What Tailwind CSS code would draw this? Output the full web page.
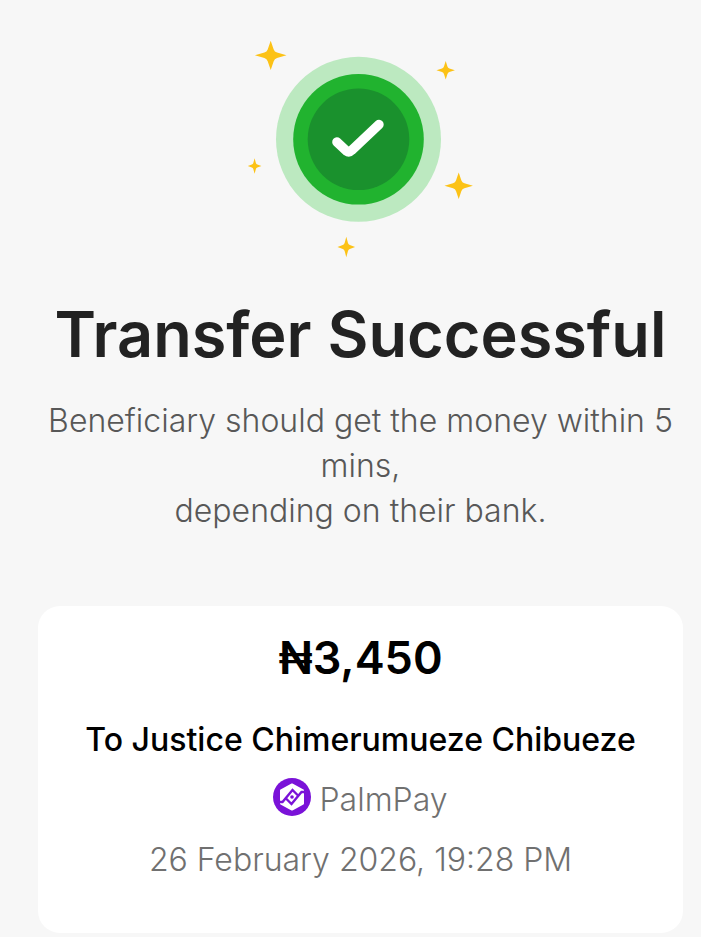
<!DOCTYPE html>
<html lang="en">
<head>
<meta charset="utf-8">
<meta name="viewport" content="width=device-width, initial-scale=1">
<title>Transfer Successful</title>
<script src="https://cdn.jsdelivr.net/npm/@tailwindcss/browser@4"></script>
</head>
<body class="min-h-screen bg-[#f7f7f7] font-['Inter',sans-serif]">
<main class="flex flex-col items-center pt-10 pr-[18px] pb-1 pl-[38px] text-center">
  <svg class="h-[220px] w-[229px]" viewBox="246 40 229 220" role="img" aria-label="Success">
    <defs><path id="star" d="M0-1L.19-.4Q.24-.24.4-.19L1 0L.4.19Q.24.24.19.4L0 1L-.19.4Q-.24.24-.4.19L-1 0L-.4-.19Q-.24-.24-.19-.4Z"/></defs>
    <circle cx="358.500" cy="139.300" r="82.500" fill="#bce9c0"/>
    <circle cx="358.500" cy="139.300" r="65.300" fill="#21b32f"/>
    <circle cx="358.500" cy="139.300" r="50.800" fill="#1a912d"/>
    <path d="M336.900 142L346.500 151Q349 153 351.500 150.500L379 124.500" fill="none" stroke="#fff" stroke-width="9.400" stroke-linecap="round" stroke-linejoin="round"/>
    <g fill="#fcc216">
      <use href="#star" transform="translate(270.700 55.300) scale(15.800 14.600)"/>
      <use href="#star" transform="translate(445.700 70.300) scale(9.200 9.200)"/>
      <use href="#star" transform="translate(254.600 166) scale(6.800 7.800)"/>
      <use href="#star" transform="translate(458.700 185.700) scale(14.200 13.300)"/>
      <use href="#star" transform="translate(346.300 247) scale(8.800 10.200)"/>
    </g>
  </svg>
  <h1 class="mt-[38px] text-[63px] leading-[72px] font-semibold text-[#222]">Transfer Successful</h1>
  <p class="mt-7 text-[32px] leading-[45px] font-light text-[#585858]">Beneficiary should get the money within 5 mins,<br>depending on their bank.</p>
  <section class="mt-[73px] w-full rounded-[22px] bg-white px-4 pt-6 pb-[51px]">
    <p class="text-[45px] leading-[56px] font-semibold text-black">₦3,450</p>
    <h2 class="mt-8 text-[32px] leading-[44px] font-medium text-black">To Justice Chimerumueze Chibueze</h2>
    <div class="mt-4 flex items-start justify-center gap-2 text-[32px] leading-[44px] font-light text-[#707070]">
      <svg class="size-[38px] shrink-0" viewBox="0 0 38 38" aria-hidden="true">
        <circle cx="19" cy="19" r="19" fill="#7a12d8"/>
        <path d="M19 6.500L30 12.500V25.500L19 31.500L8 25.500V12.500Z" fill="#fff" stroke="#fff" stroke-width="2" stroke-linejoin="round"/>
        <path d="M6 24H9.500L19.500 12L25.500 18M32 14H28.500L18.500 26L12.500 20" fill="none" stroke="#7a12d8" stroke-width="2.400"/>
        <circle cx="19" cy="19" r="1.800" fill="#7a12d8"/>
      </svg>
      <span>PalmPay</span>
    </div>
    <p class="mt-4 text-[32px] leading-[44px] font-light text-[#707070]">26 February 2026, 19:28 PM</p>
  </section>
</main>
</body>
</html>
